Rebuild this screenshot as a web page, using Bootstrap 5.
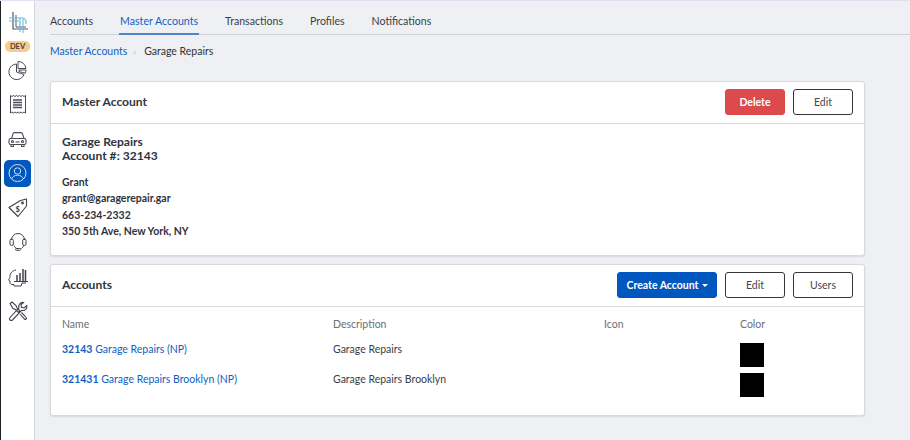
<!DOCTYPE html>
<html lang="en">
<head>
<meta charset="utf-8">
<title>Master Account</title>
<link href="https://cdn.jsdelivr.net/npm/bootstrap@5.3.0/dist/css/bootstrap.min.css" rel="stylesheet">
<style>
html,body{height:100%;overflow:hidden}
body{font-family:Lato,"Liberation Sans",sans-serif;font-size:10.5px;color:#2f3338;background:#eff0f4;border-top:1px solid #e4deee}
.shell{height:100%}
.rail{width:35px;flex:none;background:#fff;border-right:1px solid #d4d5da;border-left:1px solid #1d2024;padding-top:9px}
.rail-item{width:27px;height:27px;margin-left:3px;margin-bottom:7.5px;color:#4a4d55}
.rail-item svg{display:block}
.rail-logo{height:26px;margin-bottom:5px}
.rail-active{background:#0057bd;border-radius:5px;color:#cfe0f5}
.dev-tag{width:25px;height:11px;margin:0 0 4.5px 4px;border-radius:5px;background:#f7ca8d;font-size:7.5px;line-height:11px;font-weight:700;color:#3c3f46;text-align:center}
.main-area{padding:0 45px 0 15px;min-width:0}
.tabs-bar{height:34px;border-bottom:1px solid #d0d1d6;margin-right:-45px}
.tab-link{display:block;height:34px;line-height:41px;margin-right:27px;color:#3b3e44;text-decoration:none;white-space:nowrap;padding:0;font-size:10.6px}
.tab-link.active-tab{color:#0f5fc0;border-bottom:2px solid #4a86cc;padding:0 1px;margin-left:-1px;margin-right:26px}
.crumbs{height:46px;padding-top:9px;line-height:15px}
.crumbs a{color:#0f5fc0;text-decoration:none}
.crumbs .sep{color:#b9bbc2;margin:0 8px 0 6px;font-size:10px}
.panel{background:#fff;border:1px solid #d8d9dd;border-radius:3px;box-shadow:0 1px 2px rgba(0,0,0,.1);margin-bottom:8px}
.panel-head{height:42px;border-bottom:1px solid #d8d9dd;padding:0 11px 1px}
.panel-title{font-size:12.100px;font-weight:700;color:#33363b}
.act-btn{width:60px;height:26px;padding:0;font-size:10.500px;line-height:24px;border-radius:3px;border:1px solid #33363b;background:#fff;color:#44474d}
.act-del{background:#dc4a4c;border-color:#dc4a4c;color:#fff;font-weight:700}
.act-add{width:100px;background:#0057bd;border-color:#0057bd;color:#fff;font-weight:700}
.act-add::after{margin-left:3px;vertical-align:2px;border-top-width:3px;border-left-width:3px;border-right-width:3px}
.act-gap{gap:8px}
.acc-body{height:131px;padding:11px 11px 0;font-weight:700;color:#2f3340}
.acc-name{font-size:12.100px;line-height:14px;margin-bottom:11px}
.acc-line{line-height:16.400px}
.table-wrap{height:108px;padding:0 11px}
.col-a{width:271px}.col-b{width:271px}.col-c{width:136px}
.hdr-row{height:36px;align-items:center;color:#6c6e74}
.data-row{height:30px;align-items:flex-start;color:#3b3e44;line-height:13px}
.data-row a{color:#0f5fc0;text-decoration:none}
.swatch{width:24px;height:24px;background:#000;display:block}
</style>
</head>
<body>
<div class="shell d-flex">
  <nav class="rail d-flex flex-column">
    <div class="rail-item rail-logo">
      <svg width="27" height="26" viewBox="0 0 27 26" fill="none"><path d="M9 2v17h15" stroke="#555a66" stroke-width="1.200"/><path d="M12 5v12h10" stroke="#555a66" stroke-width="1"/><path d="M5 8h13c3 0 4 1 4 4v2" stroke="#6ab7dc" stroke-width="1.100"/><path d="M5 11h10M16 8v14M19 9v14" stroke="#6ab7dc" stroke-width="1.100"/></svg>
    </div>
    <div class="dev-tag">DEV</div>
    <div class="rail-item">
      <svg width="27" height="27" viewBox="0 0 27 27" fill="none" stroke="currentColor" stroke-width="1"><path d="M12.500 7a7.800 7.800 0 1 0 7.500 10.500l-7.500-2.500z"/><path d="M14 4.500a7.800 7.800 0 0 1 8 7H14z"/><path d="M15 13h7a7 7 0 0 1-.8 3.200l-6.200-1.700z"/></svg>
    </div>
    <div class="rail-item">
      <svg width="27" height="27" viewBox="0 0 27 27" fill="none" stroke="currentColor" stroke-width="1"><path d="M6.500 4.500l1.500 1 1.500-1 1.500 1 1.500-1 1.500 1 1.500-1 1.500 1 1.500-1 1.500 1 1.500-1v17.500l-1.500-1-1.500 1-1.500-1-1.500 1-1.500-1-1.500 1-1.500-1-1.500 1-1.500-1-1.500 1z"/><path d="M9 9h9M9 11.500h9M9 14h9M9 16.500h9" stroke-width="1.300"/></svg>
    </div>
    <div class="rail-item">
      <svg width="27" height="27" viewBox="0 0 27 27" fill="none" stroke="currentColor" stroke-width="1.100"><path d="M7.500 12.500l1.500-4.700c.2-.7.700-1.200 1.400-1.200h6.700c.7 0 1.200.5 1.400 1.200l1.500 4.700"/><rect x="5" y="12.500" width="17" height="6" rx="1.800"/><path d="M7 18.500v2h2.500v-2M17.500 18.500v2H20v-2"/><circle cx="8.500" cy="15.500" r="1"/><circle cx="18.500" cy="15.500" r="1"/><path d="M11.500 16h4"/></svg>
    </div>
    <div class="rail-item rail-active">
      <svg width="27" height="27" viewBox="0 0 27 27" fill="none" stroke="currentColor" stroke-width="1"><circle cx="13.500" cy="13" r="8.500"/><circle cx="13.500" cy="11" r="3.200"/><path d="M7.500 19c1-2.500 3.200-3.800 6-3.800s5 1.300 6 3.800"/></svg>
    </div>
    <div class="rail-item">
      <svg width="27" height="27" viewBox="0 0 27 27" fill="none" stroke="#3f424a" stroke-width="1.100"><path d="M5 12.500L16.500 5.500l6-1.500v7L14 21.500z" stroke-linejoin="round"/><circle cx="18.500" cy="8" r=".9"/><text x="11.500" y="16.500" font-family="Lato,sans-serif" font-size="7.500" font-weight="700" fill="#3f424a" stroke="none">$</text></svg>
    </div>
    <div class="rail-item">
      <svg width="27" height="27" viewBox="0 0 27 27" fill="none" stroke="#3f424a" stroke-width="1"><path d="M7.500 11a6.500 6.500 0 0 1 13 0"/><rect x="6" y="10" width="3.300" height="6.500" rx="1.500"/><rect x="18.700" y="10" width="3.300" height="6.500" rx="1.500"/><path d="M10 16.500c.8 2 2 3 4 3.500M19.500 16.500c-.5 2-1.500 3-3 3.500"/><rect x="11.500" y="19.500" width="5" height="1.800" rx=".9"/></svg>
    </div>
    <div class="rail-item">
      <svg width="27" height="27" viewBox="0 0 27 27" fill="none" stroke="#3f424a" stroke-width="1"><path d="M12 6c-3.500.5-6 3-6 6.500 0 1.500-.8 2.500-1.500 3.500l1.500 1v2c0 1 1 1.500 2 1.500h2V22h7l1-3h4"/><path d="M13 11v6M16 9v8M19 5v12M21.500 6v11" stroke-width="1.500"/><path d="M10 17.500h14"/></svg>
    </div>
    <div class="rail-item">
      <svg width="27" height="27" viewBox="0 0 27 27" fill="none" stroke="#3f424a" stroke-width="1.100"><path d="M6 5.500l2-1.500 4 3.500 1 2.500 3 3-1.500 1.500-3-3-2.500-1z"/><path d="M19.500 4.500a4 4 0 0 0-4.500 5.300L6 19.500c-.8 1-.8 1.800 0 2.500s1.700.7 2.500 0l9.100-9.700a4 4 0 0 0 5.200-4.800L20 10l-2.500-.8-.6-2.400z"/><path d="M16 16l4.500 5c1 1 2.600-.5 1.700-1.500L17.500 14.500"/></svg>
    </div>
  </nav>
  <main class="main-area flex-grow-1">
    <div class="tabs-bar d-flex">
      <a class="tab-link" href="#">Accounts</a>
      <a class="tab-link active-tab" href="#">Master Accounts</a>
      <a class="tab-link" href="#">Transactions</a>
      <a class="tab-link" href="#">Profiles</a>
      <a class="tab-link" href="#">Notifications</a>
    </div>
    <div class="crumbs"><a href="#">Master Accounts</a><span class="sep">&#8250;</span><span>Garage Repairs</span></div>
    <section class="panel">
      <div class="panel-head d-flex align-items-center justify-content-between">
        <span class="panel-title">Master Account</span>
        <div class="d-flex act-gap">
          <button class="btn act-btn act-del" type="button">Delete</button>
          <button class="btn act-btn" type="button">Edit</button>
        </div>
      </div>
      <div class="acc-body">
        <div class="acc-name">Garage Repairs<br>Account #: 32143</div>
        <div class="acc-line">Grant</div>
        <div class="acc-line">grant@garagerepair.gar</div>
        <div class="acc-line">663-234-2332</div>
        <div class="acc-line">350 5th Ave, New York, NY</div>
      </div>
    </section>
    <section class="panel">
      <div class="panel-head d-flex align-items-center justify-content-between">
        <span class="panel-title">Accounts</span>
        <div class="d-flex act-gap">
          <button class="btn act-btn act-add dropdown-toggle" type="button">Create Account</button>
          <button class="btn act-btn" type="button">Edit</button>
          <button class="btn act-btn" type="button">Users</button>
        </div>
      </div>
      <div class="table-wrap">
        <div class="d-flex hdr-row"><div class="col-a">Name</div><div class="col-b">Description</div><div class="col-c">Icon</div><div>Color</div></div>
        <div class="d-flex data-row"><div class="col-a"><a href="#"><strong>32143</strong> Garage Repairs (NP)</a></div><div class="col-b">Garage Repairs</div><div class="col-c"></div><span class="swatch"></span></div>
        <div class="d-flex data-row"><div class="col-a"><a href="#"><strong>321431</strong> Garage Repairs Brooklyn (NP)</a></div><div class="col-b">Garage Repairs Brooklyn</div><div class="col-c"></div><span class="swatch"></span></div>
      </div>
    </section>
  </main>
</div>
</body>
</html>
